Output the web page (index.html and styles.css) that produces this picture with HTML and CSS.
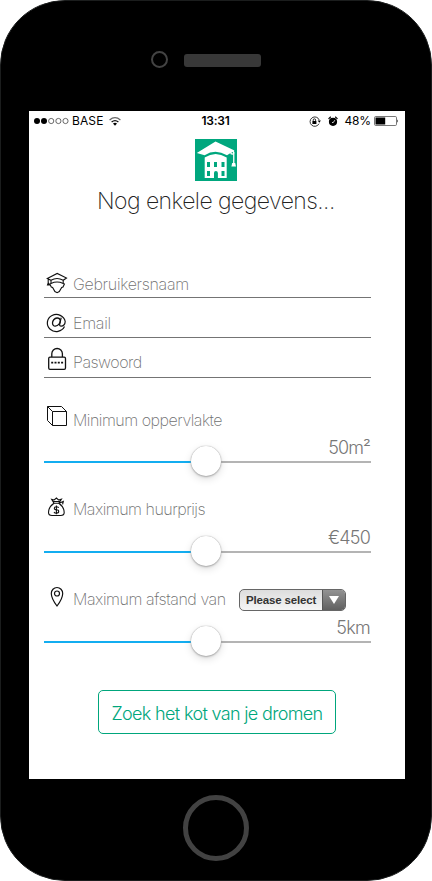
FILE: index.html
```html
<!DOCTYPE html>
<html lang="nl">
<head>
<meta charset="utf-8">
<title>Nog enkele gegevens</title>
<link rel="stylesheet" href="styles.css">
</head>
<body>
<div class="phone">
  <div class="bezel-top"><span class="camera"></span><span class="speaker"></span></div>
  <main class="screen">
    <header class="status">
      <div class="carrier">
        <svg width="36" height="8" viewBox="0 0 36 8"><circle cx="3" cy="4" r="3"/><circle cx="10" cy="4" r="3"/><g fill="none" stroke="#444" stroke-width=".8"><circle cx="17.2" cy="4" r="2.6"/><circle cx="24.4" cy="4" r="2.6"/><circle cx="31.5" cy="4" r="2.6"/></g></svg>
        <span class="network">BASE</span>
        <svg class="wifi" width="12" height="9" viewBox="0 0 12 9"><g fill="none" stroke="#111" stroke-width="1.3"><path d="M.6 3Q6-1.6 11.4 3" stroke="#666"/><path d="M2.6 5.1Q6 2.2 9.4 5.1"/></g><path d="M4 6.5Q6 5 8 6.5L6 8.7z"/></svg>
      </div>
      <span class="time">13:31</span>
      <div class="indicators">
        <svg width="12" height="11" viewBox="0 0 12 11"><path d="M10 7.7A4.7 4.7 0 1 1 10.2 4" fill="none" stroke="#222" stroke-width=".9"/><path d="M8.7 4.6h3.2l-1.6 2.2zM3.4 5h4v3h-4z"/><path d="M4.2 5V4a1.2 1.2 0 0 1 2.4 0v1" fill="none" stroke="#000" stroke-width=".8"/></svg>
        <svg class="alarm" width="10" height="11" viewBox="0 0 10 11"><circle cx="5" cy="5.8" r="4.1"/><path d="M.5 2.9 2.8.8M9.5 2.9 7.2.8" stroke="#000" stroke-width="1.2"/><path d="M4 6.5h1.3l1.5-2.3" fill="none" stroke="#fff" stroke-width=".8"/></svg>
        <span class="percent">48%</span>
        <svg width="25" height="10" viewBox="0 0 25 10"><rect x=".5" y=".5" width="22" height="9" rx="1.2" fill="#fff" stroke="#555" stroke-width=".8"/><path d="M1.5 1.5h9.7v7H1.5z"/><path d="M23.3 3.2q1.5 1.7 0 3.6z"/></svg>
      </div>
    </header>

    <svg class="logo" width="42" height="42" viewBox="0 0 42 42"><path fill="#00a77e" d="M0 0h42v42H0z"/><g fill="#fff"><path d="M1.8 14 20.5 2.6 39.5 11.500 32 16.3Q20.5 9.2 9.6 16.2z"/><path d="M9.7 18.6Q20.5 11.4 31.7 18.600V39H9.700z"/><circle cx="37.3" cy="13.6" r="2.2"/><path d="M38.100 14h1.300v11h-1.300z"/><path d="M37.200 24h3l.8 3.500h-4.600z"/></g><path fill="#00a77e" d="M12 23h3v5h-3zm7 0h3v5h-3zm7.500 0h3v5h-3zM12 32h3v5h-3zm14.500 0h3v5h-3zM19 39v-5q0-2 1.900-2t2 2v5z"/><circle cx="37.300" cy="13.800" r=".7" fill="#00a77e"/></svg>
    <h1>Nog enkele gegevens...</h1>

    <form>
      <div class="field">
        <svg class="icon" width="22" height="22" viewBox="0 0 22 22"><g fill="none" stroke="#111" stroke-width="1.1"><path d="M1.3 6.5 11.2 1.4 20.5 6 17.2 8.3Q11 4.7 5 8.3zM2.2 7v4l-.7 2h1.7l-.8-2M5 8.3v3.1Q11 8.7 17.2 11.4V8.3M5 11.4 3.8 12l1.5 3 1.3.5 2.3 4 2.2 1.2 2.2-1.2 2.4-4 1.3-.5 1.4-3-1.2-.6"/></g></svg>
        <label class="f-user">Gebruikersnaam</label>
      </div>
      <div class="field">
        <svg class="icon" width="22" height="22" viewBox="0 0 22 22"><g fill="none" stroke="#111"><path stroke-width="1.2" d="M18.500 15.600A9 8.500 0 1 1 19.200 10.500C19.200 13.500 17 15.200 15.300 15.200S13.400 14 13.800 12.500L15.200 6.700"/><path stroke-width="1.3" d="M14.300 9.400C14 7.800 12.600 6.900 11 7 8.300 7.200 6.500 9.800 6.500 12.100 6.500 14 7.700 15.200 9.300 15.100 12.400 15 14.400 12 14.300 9.400"/></g></svg>
        <label class="f-mail">Email</label>
      </div>
      <div class="field">
        <svg class="icon" width="22" height="24" viewBox="0 0 22 24"><g fill="none" stroke="#111" stroke-width="1.3"><rect x="2.7" y="10.1" width="16.8" height="12.3" rx="1.3"/><path d="M5.8 10V6.8a5.3 5.3 0 0 1 10.6 0V10"/><path stroke-width="1.7" d="M5.2 15.6h2m1.3 0h2m1.3 0h2m1.3 0h2"/></g></svg>
        <label class="f-pass">Paswoord</label>
      </div>

      <section class="range">
        <div class="caption">
          <svg class="icon" width="22" height="22" viewBox="0 0 22 22"><path fill="none" stroke="#111" stroke-width="1" d="M6.5 6.5h14v14h-14zM6.5 6.5 1.5 1.5h14l5 5M1.5 1.5v14l5 5"/></svg>
          <label class="r-area">Minimum oppervlakte</label>
        </div>
        <output class="v-area">50m²</output>
        <div class="slider"><span class="filled"></span><span class="knob"></span><span class="rest"></span></div>
      </section>
      <section class="range">
        <div class="caption">
          <svg class="icon low" width="22" height="22" viewBox="0 0 22 22"><g fill="none" stroke="#111" stroke-width="1.1"><path d="M8 7.2Q2.500 11 2.500 16.500q0 3 3.500 3h8.700q3.500 0 3.500-3 0-5.500-5.400-9.300z"/><path d="M8 7.200 5.700 3.300l2.500.7 2.200-2 2.100 2 2.900-.8-2.600 4M7.200 5.500h6.500M13 7.300l4.300-1.800-.7 2.800"/><path d="M12.700 11.700q-.7-1-2.400-1-2 0-2 1.500t2.200 1.500 2.200 1.700q0 1.700-2.300 1.700-1.800 0-2.400-1.200M10.400 9.500v8.800"/></g></svg>
          <label class="r-rent">Maximum huurprijs</label>
        </div>
        <output class="v-rent">€450</output>
        <div class="slider"><span class="filled"></span><span class="knob"></span><span class="rest"></span></div>
      </section>
      <section class="range">
        <div class="caption">
          <svg class="icon low" width="22" height="22" viewBox="0 0 22 22"><g fill="none" stroke="#111" stroke-width="1.2"><path d="M11 20Q5.300 12.300 5.300 7.400a5.700 5.900 0 0 1 11.400 0Q16.700 12.300 11 20z"/><circle cx="11" cy="7.500" r="2.500"/></g></svg>
          <label class="r-dist">Maximum afstand van</label>
          <div class="select"><span class="choice">Please select</span><span class="arrow"></span></div>
        </div>
        <output class="v-dist">5km</output>
        <div class="slider"><span class="filled"></span><span class="knob"></span><span class="rest"></span></div>
      </section>
      <button type="button"><span>Zoek het kot van je dromen</span></button>
    </form>
  </main>
  <div class="bezel-bottom"><span class="home"></span></div>
</div>
</body>
</html>
```
FILE: styles.css
```css
* { box-sizing: border-box; }
body { margin: 0; background: #fff; font-family: Inter, "Liberation Sans", sans-serif; }
svg { display: block; flex: none; }
.phone { width: 432px; height: 881px; background: #000; border: 1px solid #1b1d1d; border-radius: 65px; padding: 0 27px 0 28px; overflow: hidden; }
.bezel-top { height: 110px; display: flex; align-items: flex-start; padding: 50px 0 0 122px; }
.camera { width: 17px; height: 17px; border: 2.5px solid #434343; border-radius: 50%; }
.speaker { width: 77px; height: 13px; margin: 3px 0 0 16px; background: #383838; border-radius: 3px; }
.screen { height: 668px; width: 376px; background: #fff; display: flex; flex-direction: column; }
.status { height: 20px; padding: 0 6px 0 5px; display: grid; grid-template-columns: 1fr auto 1fr; align-items: center; font-size: 12px; color: #000; line-height: 20px; }
.carrier, .indicators { display: flex; align-items: center; }
.network { margin-left: 2px; letter-spacing: .1px; }
.wifi { margin-left: 6px; }
.time { font-weight: 600; letter-spacing: -.2px; position: relative; left: -1px; }
.indicators { justify-content: flex-end; }
.alarm { margin-left: 7px; }
.percent { margin: 0 3px 0 6px; letter-spacing: -.15px; }
.logo { margin: 8px 0 0 166px; }
h1 { margin: 4px 0 0 68px; height: 32px; line-height: 32px; font-size: 23px; font-weight: 250; letter-spacing: -.56px; color: #222; white-space: nowrap; }
form { margin: 41px 0 0 15px; width: 327px; }
.field { height: 40px; border-bottom: 1px solid #747474; display: flex; padding: 14px 0 0 2px; }
.field .icon { margin-right: 5px; }
.field:nth-child(2) .icon { margin-top: -1px; }
.field:nth-child(3) .icon { margin-top: -5px; }
.field label, .caption label { font-size: 16px; line-height: 22px; font-weight: 250; color: #707070; white-space: nowrap; }
.field:nth-child(1) label { margin-top: 1px; }
.field:nth-child(3) label { margin-top: -1px; }
.f-user { letter-spacing: -.3px; }
.f-mail { letter-spacing: -.25px; }
.f-pass { letter-spacing: -.5px; }
.r-area, .r-rent { letter-spacing: -.5px; }
.r-dist { letter-spacing: -.43px; }
.range { height: 90px; padding-top: 27px; display: flex; flex-direction: column; }
.caption { height: 22px; display: flex; padding-left: 2px; }
.caption .icon { margin-right: 5px; }
.caption .low { margin-top: 1px; }
.caption label { margin-top: 4px; width: 153px; }
.caption .r-rent, .caption .r-dist { margin-top: 3px; }
output { height: 20px; margin: 11px 1px 0 0; align-self: flex-end; font-size: 18px; line-height: 20px; font-weight: 300; letter-spacing: -.9px; color: #777; }
.v-rent { letter-spacing: -.8px; }
.v-dist { letter-spacing: -.7px; }
.slider { height: 30px; flex: none; margin-top: -12px; display: flex; align-items: center; }
.filled, .rest { height: 2px; position: relative; top: 1px; }
.filled { width: 147px; background: #13adf0; }
.rest { flex: 1; background: #b4b4b4; }
.knob { width: 30px; height: 30px; flex: none; border-radius: 50%; background: #fff; box-shadow: 0 0 1px #999, 0 1px 2px #aaa, 0 3px 9px #0002; position: relative; z-index: 1; }
.select { height: 22px; width: 107px; margin: 4px 0 0 13px; border: 1.5px solid #666; border-radius: 5px; background: linear-gradient(#ddd, #f5f5f5); display: flex; overflow: hidden; }
.choice { flex: 1; padding-left: 6px; font: bold 11.5px/20px "Liberation Sans", sans-serif; letter-spacing: -.16px; color: #333; white-space: nowrap; }
.arrow { width: 23px; background: linear-gradient(#939393, #606060); border-left: 1px solid #555; display: flex; align-items: center; justify-content: center; }
.arrow::before { content: ""; border: 5px solid transparent; border-top: 8px solid #fff; border-bottom: 0; }
button { width: 238px; height: 44px; margin: 42px 0 0 54px; padding: 0; display: block; border: 1px solid #00a67c; border-radius: 5px; background: #fff; color: #00a67c; font: 300 18px/44px Inter, "Liberation Sans", sans-serif; letter-spacing: -.66px; white-space: nowrap; }
button span { display: block; padding-top: 1px; height: 42px; }
.bezel-bottom { height: 101px; display: flex; padding: 16px 0 0 154px; }
.home { width: 66px; height: 66px; border: 5px solid #424242; border-radius: 50%; }
```
